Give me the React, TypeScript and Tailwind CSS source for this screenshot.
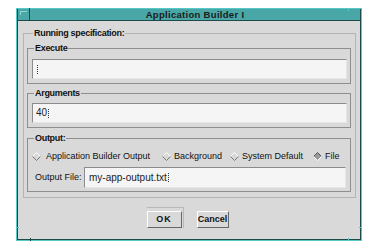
import React from 'react';

const font = "font-['Liberation_Sans',Arial,sans-serif]";

const Diamond: React.FC<{ on?: boolean }> = ({ on }) => (
  <svg width="9" height="9" viewBox="0 0 9 9" className="shrink-0">
    <polygon points="4.5,0.5 8.5,4.5 4.5,8.5 0.5,4.5" fill={on ? '#9a9a9a' : '#d9d9d9'} />
    <polyline points="0.5,4.5 4.5,0.5 8.5,4.5" fill="none" stroke={on ? '#555555' : '#ffffff'} strokeWidth="1" />
    <polyline points="0.5,4.5 4.5,8.5 8.5,4.5" fill="none" stroke={on ? '#ffffff' : '#7a7a7a'} strokeWidth="1" />
  </svg>
);

const Group: React.FC<{ label: string; outer?: boolean; className?: string; children: React.ReactNode }> = ({
  label,
  outer,
  className = '',
  children,
}) => (
  <fieldset className={`border ${outer ? 'border-[#b4b4b4]' : 'border-[#8e8e8e]'} ${className}`}>
    <legend className="ml-[6px] px-[1px] text-[9px] font-bold leading-[12px] tracking-[-0.3px] text-[#111]">
      {label}
    </legend>
    {children}
  </fieldset>
);

const Field: React.FC<{ value?: string; className?: string }> = ({ value = '', className = '' }) => (
  <div
    className={`flex items-center bg-[#f5f5f5] border border-t-[#8c8c8c] border-l-[#8c8c8c] border-b-[#e6e6e6] border-r-[#e6e6e6] pl-[3px] text-[10px] text-[#222] ${className}`}
  >
    <span className="leading-[12px]">{value}</span>
    <span className="ml-[1px] h-[9px] border-l border-dotted border-[#333]" />
  </div>
);

const App: React.FC = () => {
  return (
    <div className={`w-[379px] h-[250px] bg-white overflow-hidden ${font}`}>
      {/* window frame */}
      <div className="relative ml-[16px] mt-[8px] w-[346px] h-[233px] border border-[#56c8c8] flex flex-col">
        {/* title bar */}
        <div className="h-[11px] flex bg-[#49a7a7] shrink-0">
          <div className="w-[13px] h-[11px] border-l border-r border-[#1f4a4a] flex items-start">
            <div className="mt-[2px] ml-[2px] w-[7px] h-[4px] border-t border-l border-[#8fd6d6]" />
          </div>
          <div className="flex-1 flex items-center justify-center text-[9.5px] font-bold leading-[11px] tracking-[0.3px] text-[#1a1a1a]">
            Application Builder I
          </div>
          <div className="w-[1px] bg-[#1f4a4a]" />
        </div>

        {/* body */}
        <div className="flex-1 bg-[#d9d9d9] border border-[#1f4a4a]">
          <Group label="Running specification:" outer className="mt-[6px] ml-[5px] mr-[4px] pl-[3px] pr-[4px] pb-[5px]">
            <Group label="Execute" className="mt-[3px]">
              <div className="pt-[5px] pb-[4px] pl-[4px] pr-[3px]">
                <Field className="h-[20px]" />
              </div>
            </Group>

            <Group label="Arguments" className="mt-[3px]">
              <div className="pt-[4px] pb-[4px] pl-[4px] pr-[3px]">
                <Field value="40" className="h-[20px]" />
              </div>
            </Group>

            <Group label="Output:" className="mt-[4px]">
              <div className="pt-[6px] pb-[3px] pl-[4px] pr-[4px]">
                <div className="flex items-center h-[12px] text-[9px] text-[#111] leading-[12px]">
                  <div className="w-[130px] flex items-center gap-[5px]">
                    <Diamond />
                    <span>Application Builder Output</span>
                  </div>
                  <div className="w-[68px] flex items-center gap-[3px]">
                    <Diamond />
                    <span>Background</span>
                  </div>
                  <div className="w-[83px] flex items-center gap-[3px]">
                    <Diamond />
                    <span>System Default</span>
                  </div>
                  <div className="flex items-center gap-[3px]">
                    <Diamond on />
                    <span>File</span>
                  </div>
                </div>
                <div className="mt-[5px] flex items-center">
                  <span className="ml-[3px] w-[49px] text-[9px] text-[#111]">Output File:</span>
                  <Field value="my-app-output.txt" className="flex-1 h-[21px] pl-[4px]" />
                </div>
              </div>
            </Group>
          </Group>

          {/* buttons */}
          <div className="mt-[9px] flex justify-center items-start pr-[3px]">
            <div className="flex border-t border-r border-[#b8b8b8] pt-[3px] pr-[1px]">
              <button className="block w-[35px] h-[17px] bg-[#d9d9d9] border border-t-white border-l-white border-b-[#666] border-r-[#666] text-[9px] leading-[15px] font-bold tracking-[1px] text-[#111]">
                OK
              </button>
            </div>
            <button className="block ml-[13px] mt-[4px] w-[32px] h-[17px] bg-[#d9d9d9] border border-t-white border-l-white border-b-[#666] border-r-[#666] text-[9px] leading-[15px] font-bold text-[#111]">
              Cancel
            </button>
          </div>
        </div>

        {/* frame resize marks */}
        <div className="absolute left-[12px] top-[-1px] w-[1px] h-[3px] bg-[#1f4a4a]" />
        <div className="absolute right-[12px] top-[-1px] w-[1px] h-[3px] bg-[#56c8c8]" />
        <div className="absolute left-[13px] bottom-[-1px] w-[1px] h-[3px] bg-[#1f4a4a]" />
        <div className="absolute right-[12px] bottom-[-1px] w-[1px] h-[3px] bg-[#56c8c8]" />
        <div className="absolute left-[-1px] bottom-[12px] w-[3px] h-[1px] bg-[#56c8c8]" />
        <div className="absolute right-[-1px] bottom-[12px] w-[3px] h-[1px] bg-[#56c8c8]" />
      </div>
    </div>
  );
};

export default App;
